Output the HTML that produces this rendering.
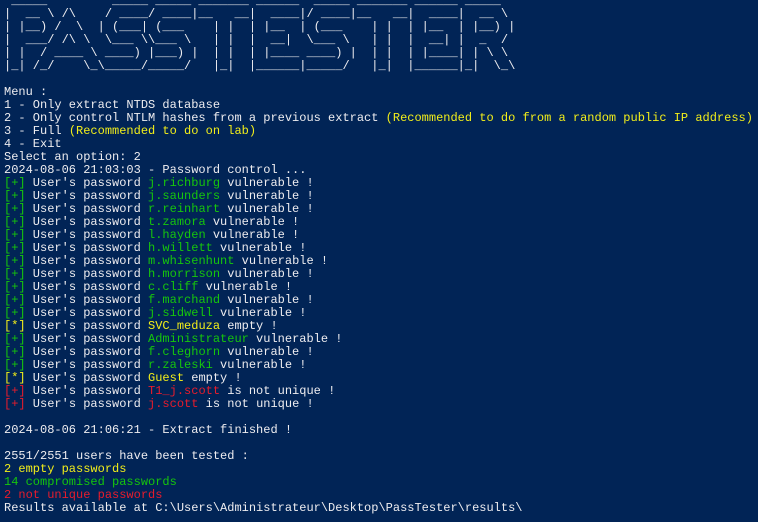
<!DOCTYPE html>
<html><head><meta charset="utf-8"><style>
html,body{margin:0;padding:0;background:#012456;width:758px;height:522px;overflow:hidden}
pre{margin:0;position:absolute;left:4px;top:-5px;font-family:"Liberation Mono",monospace;font-size:12px;line-height:13px;color:#eeedf0;white-space:pre}
.g{color:#16c60c}.y{color:#f2ee1a}.r{color:#e81c2c}
</style></head><body><pre> _____         _____ _____ _______ ______  _____ _______ ______ _____  
|  __ \ /\    / ____/ ____|__   __|  ____|/ ____|__   __|  ____|  __ \ 
| |__) /  \  | (___| (___    | |  | |__  | (___    | |  | |__  | |__) |
|  ___/ /\ \  \___ \\___ \   | |  |  __|  \___ \   | |  |  __| |  _  / 
| |  / ____ \ ____) |___) |  | |  | |____ ____) |  | |  | |____| | \ \ 
|_| /_/    \_\_____/_____/   |_|  |______|_____/   |_|  |______|_|  \_\

Menu :
1 - Only extract NTDS database
2 - Only control NTLM hashes from a previous extract <span class="y">(Recommended to do from a random public IP address)</span>
3 - Full <span class="y">(Recommended to do on lab)</span>
4 - Exit
Select an option: 2
2024-08-06 21:03:03 - Password control ...
<span class="g">[+]</span> User's password <span class="g">j.richburg</span> vulnerable !
<span class="g">[+]</span> User's password <span class="g">j.saunders</span> vulnerable !
<span class="g">[+]</span> User's password <span class="g">r.reinhart</span> vulnerable !
<span class="g">[+]</span> User's password <span class="g">t.zamora</span> vulnerable !
<span class="g">[+]</span> User's password <span class="g">l.hayden</span> vulnerable !
<span class="g">[+]</span> User's password <span class="g">h.willett</span> vulnerable !
<span class="g">[+]</span> User's password <span class="g">m.whisenhunt</span> vulnerable !
<span class="g">[+]</span> User's password <span class="g">h.morrison</span> vulnerable !
<span class="g">[+]</span> User's password <span class="g">c.cliff</span> vulnerable !
<span class="g">[+]</span> User's password <span class="g">f.marchand</span> vulnerable !
<span class="g">[+]</span> User's password <span class="g">j.sidwell</span> vulnerable !
<span class="y">[*]</span> User's password <span class="y">SVC_meduza</span> empty !
<span class="g">[+]</span> User's password <span class="g">Administrateur</span> vulnerable !
<span class="g">[+]</span> User's password <span class="g">f.cleghorn</span> vulnerable !
<span class="g">[+]</span> User's password <span class="g">r.zaleski</span> vulnerable !
<span class="y">[*]</span> User's password <span class="y">Guest</span> empty !
<span class="r">[+]</span> User's password <span class="r">T1_j.scott</span> is not unique !
<span class="r">[+]</span> User's password <span class="r">j.scott</span> is not unique !

2024-08-06 21:06:21 - Extract finished !

2551/2551 users have been tested :
<span class="y">2 empty passwords</span>
<span class="g">14 compromised passwords</span>
<span class="r">2 not unique passwords</span>
Results available at C:\Users\Administrateur\Desktop\PassTester\results\
</pre></body></html>
